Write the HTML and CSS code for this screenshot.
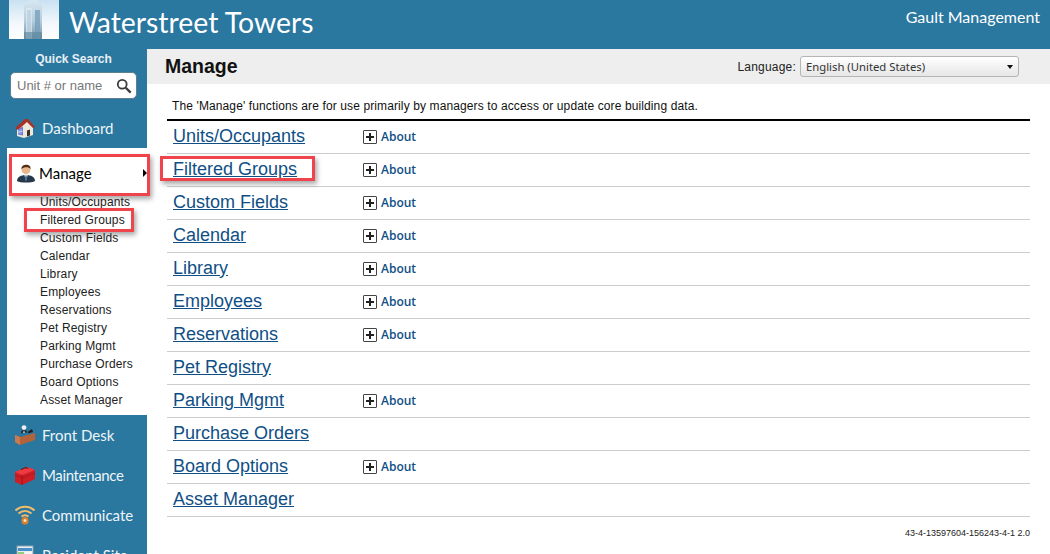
FILE: index.html
```html
<!DOCTYPE html>
<html lang="en">

<head>
    <meta charset="UTF-8">
    <meta name="viewport" content="width=device-width, initial-scale=1.0">
    <title>Waterstreet Towers - Manage</title>
    <link rel="stylesheet" href="styles.css">
</head>

<body>
    <header class="topbar">
        <svg class="logo" viewBox="0 0 50 39">
            <defs>
                <linearGradient id="sky" x1="0" y1="0" x2="0" y2="1">
                    <stop offset="0" stop-color="#c9e1f2" />
                    <stop offset=".6" stop-color="#f3f8fc" />
                    <stop offset="1" stop-color="#ffffff" />
                </linearGradient>
                <linearGradient id="tower" x1="0" y1="0" x2="0" y2="1">
                    <stop offset="0" stop-color="#d8e8f0" />
                    <stop offset=".55" stop-color="#b3cbdc" />
                    <stop offset="1" stop-color="#6d93a8" />
                </linearGradient>
            </defs>
            <rect width="50" height="39" fill="url(#sky)" />
            <path d="M15 39V6L18 1 27 0 33 4V39Z" fill="url(#tower)" />
            <path d="M17 8H23V39H17Z" fill="#dfeaf1" opacity=".75" />
            <path d="M26 10H31V39H26Z" fill="#6f97b4" opacity=".7" />
            <path d="M19 10V39M21 10V39M28 12V39M30 12V39" stroke="#8fb0c6" stroke-width=".6" />
            <path d="M15 32H33V39H15Z" fill="#5f8a9e" opacity=".65" />
        </svg>
        <div class="site-name">Waterstreet Towers</div>
        <div class="company">Gault Management</div>
    </header>

    <div class="layout">
        <aside class="sidebar">
            <h4 class="search-title">Quick Search</h4>
            <div class="search-box">
                <span>Unit # or name</span>
                <svg viewBox="0 0 18 18" class="search-icon">
                    <circle cx="7" cy="7" r="5" fill="none" stroke="#3a3a3a" stroke-width="2" />
                    <path d="M11 11l5.500 5.500" stroke="#3a3a3a" stroke-width="2.600" />
                </svg>
            </div>

            <a class="nav-item dashboard">
                <svg class="nav-icon" viewBox="0 0 20 20">
                    <path d="M2 9v9l7 2 9-3V8L11 3z" fill="#efe9dc" />
                    <path d="M0 10L10 1h3l7 8-2 1-6-6-9 8z" fill="#a83228" />
                    <path d="M3 11.500l5-3v9l-5-1z" fill="#6a78d8" />
                    <path d="M4 12v4M6 11v5M3 14l5-1" stroke="#e8e8f8" stroke-width=".6" />
                    <path d="M12 18.500v-6l3-1v6z" fill="#3b2f28" />
                </svg>
                Dashboard
            </a>

            <div class="nav-open">
                <a class="nav-item current marked">
                    <svg class="nav-icon" viewBox="0 0 20 20">
                        <path d="M1 18c0-4 4-6 9-6s9 2 9 6c-3 2-15 2-18 0z" fill="#26384a" />
                        <path d="M8 11h4l-2 7z" fill="#f2f4f6" />
                        <path d="M9.400 12.500h1.200l.4 3-1 2-1-2z" fill="#2d6fa8" />
                        <circle cx="10" cy="6.500" r="4.500" fill="#e8b68c" />
                        <path d="M5.400 6C5 1 15 0 14.600 6 13 3.500 8 3.500 5.400 6Z" fill="#4f2f14" />
                    </svg>
                    Manage
                    <span class="arrow"></span>
                </a>
                <ul class="subnav">
                    <li>Units/Occupants</li>
                    <li class="marked">Filtered Groups</li>
                    <li>Custom Fields</li>
                    <li>Calendar</li>
                    <li>Library</li>
                    <li>Employees</li>
                    <li>Reservations</li>
                    <li>Pet Registry</li>
                    <li>Parking Mgmt</li>
                    <li>Purchase Orders</li>
                    <li>Board Options</li>
                    <li>Asset Manager</li>
                </ul>
            </div>

            <a class="nav-item">
                <svg class="nav-icon" viewBox="0 0 20 20">
                    <path d="M0 10l5 2 15-4v7L5 20l-5-3z" fill="#b4623a" />
                    <path d="M0 10l5 2v8l-5-3z" fill="#c97b4f" />
                    <path d="M6 8.500c0-3 1.500-4 3-4s3 1 3 3z" fill="#20303c" />
                    <circle cx="9" cy="2.600" r="2.400" fill="#eef0f2" />
                    <path d="M9 5l.8 3H8.200z" fill="#f4f4f4" />
                    <path d="M12.500 7l4.500-3 1 3-4.500 1.200z" fill="#1e1e1e" />
                </svg>
                Front Desk
            </a>
            <a class="nav-item">
                <svg class="nav-icon" viewBox="0 0 20 20">
                    <path d="M0 7l12-5 8 3v9L7 20l-7-3z" fill="#cf1d26" />
                    <path d="M0 7l7 3 13-5-8-3z" fill="#ee3b42" />
                    <path d="M7 10v10" stroke="#8c1118" stroke-width=".8" />
                    <path d="M0 10l7 3 13-5" fill="none" stroke="#a5141c" stroke-width=".7" />
                    <path d="M6 4.500l5-2 2 1" fill="none" stroke="#5c1a1e" stroke-width="1.100" />
                </svg>
                <span class="tight">Maintenance</span>
            </a>
            <a class="nav-item">
                <svg class="nav-icon" viewBox="0 0 20 20">
                    <path d="M.5 5.500c5-5 14-5 19 0M3.500 8.500c4-3.500 9-3.500 13 0M6.500 11.500c2-1.500 5-1.500 7 0" fill="none" stroke="#f3bd6b" stroke-width="2" />
                    <rect x="6.500" y="12" width="7" height="7.500" rx="3" fill="#d8802c" />
                    <circle cx="10" cy="15.500" r="1.500" fill="#f6e3c4" />
                </svg>
                Communicate
            </a>
            <a class="nav-item">
                <svg class="nav-icon" viewBox="0 0 20 20">
                    <rect x="2" y="1" width="16" height="18" fill="#e8eef2" stroke="#8aa0ae" />
                    <rect x="3" y="3" width="14" height="3" fill="#4a90c8" />
                    <rect x="3" y="7" width="6" height="4" fill="#8fce7a" />
                    <rect x="10" y="7" width="7" height="4" fill="#f4f4f4" />
                </svg>
                Resident Site
            </a>
        </aside>

        <main class="content">
            <div class="title-bar">
                <h1>Manage</h1>
                <label class="language">
                    Language:
                    <span class="select">
                        English (United States)
                        <span class="select-arrow"></span>
                    </span>
                </label>
            </div>

            <div class="panel">
                <p class="intro">The 'Manage' functions are for use primarily by managers to access or update core building data.</p>
                <ul class="functions">
                    <li><a href="#">Units/Occupants</a><span class="about">About</span></li>
                    <li><span class="link-wrap marked"><a href="#">Filtered Groups</a></span><span class="about">About</span></li>
                    <li><a href="#">Custom Fields</a><span class="about">About</span></li>
                    <li><a href="#">Calendar</a><span class="about">About</span></li>
                    <li><a href="#">Library</a><span class="about">About</span></li>
                    <li><a href="#">Employees</a><span class="about">About</span></li>
                    <li><a href="#">Reservations</a><span class="about">About</span></li>
                    <li><a href="#">Pet Registry</a></li>
                    <li><a href="#">Parking Mgmt</a><span class="about">About</span></li>
                    <li><a href="#">Purchase Orders</a></li>
                    <li><a href="#">Board Options</a><span class="about">About</span></li>
                    <li><a href="#">Asset Manager</a></li>
                </ul>
                <div class="build">43-4-13597604-156243-4-1 2.0</div>
            </div>
        </main>
    </div>
</body>

</html>
```

FILE: styles.css
```css
*,
*::before,
*::after {
    margin: 0;
    padding: 0;
    box-sizing: border-box;
}

html,
body {
    height: 554px;
    overflow: hidden;
}

body {
    background-color: #2a77a0;
    font-family: "Liberation Sans", Arial, sans-serif;
}

ul {
    list-style: none;
}

.topbar {
    display: flex;
    align-items: flex-start;
    height: 49px;
    padding-left: 9px;
    background-color: #2a77a0;
    color: white;
    font-family: Lato, sans-serif;
}

.logo {
    width: 50px;
    height: 39px;
}

.site-name {
    margin-left: 10px;
    font-size: 28.4px;
    line-height: 45px;
}

.company {
    margin-left: auto;
    padding-right: 10px;
    font-size: 16px;
    line-height: 34px;
}

.layout {
    display: flex;
    height: 505px;
}

.sidebar {
    width: 147px;
    flex-shrink: 0;
    padding-top: 2px;
}

.search-title {
    font-size: 12px;
    line-height: 16px;
    text-align: center;
    color: #e8f0f5;
}

.search-box {
    display: flex;
    justify-content: space-between;
    align-items: center;
    width: 127px;
    height: 27px;
    margin: 5px 0 0 10px;
    padding: 0 4px 0 6px;
    background-color: white;
    border: 1px solid #5d7f92;
    border-radius: 5px;
    font-size: 13px;
    color: #777;
}

.search-icon {
    width: 16px;
    height: 16px;
}

.nav-item {
    position: relative;
    display: flex;
    align-items: center;
    gap: 7px;
    height: 40px;
    padding-left: 15px;
    font-family: Lato, sans-serif;
    font-size: 15px;
    color: #eef5f8;
}

.nav-icon {
    width: 20px;
    height: 20px;
    flex-shrink: 0;
}

.tight {
    letter-spacing: -0.35px;
}

.dashboard {
    margin-top: 9px;
}

.nav-open {
    margin-left: 7px;
    padding-bottom: 6px;
    background-color: white;
}

.current {
    height: 50px;
    gap: 3px;
    padding-left: 9px;
    color: black;
}

.arrow {
    position: absolute;
    right: 0;
    top: 21px;
    border-left: 4px solid black;
    border-top: 4px solid transparent;
    border-bottom: 4px solid transparent;
}

.subnav {
    margin-top: -5px;
}

.subnav li {
    position: relative;
    height: 18px;
    padding-left: 33px;
    font-size: 12px;
    letter-spacing: 0.14px;
    line-height: 18px;
    color: #222;
}

.marked {
    position: relative;
}

.marked::after {
    content: "";
    position: absolute;
    border: 3px solid #f0444c;
    box-shadow: 2px 3px 5px rgba(0, 0, 0, 0.35);
}

.current.marked::after {
    left: 2px;
    right: -3px;
    top: 6px;
    bottom: 2px;
}

.subnav .marked::after {
    left: 17px;
    width: 110px;
    top: -3px;
    height: 24px;
}

.link-wrap.marked::after {
    left: -13px;
    width: 155px;
    top: -3px;
    height: 25px;
}

.content {
    flex: 1;
    background-color: white;
}

.title-bar {
    display: flex;
    justify-content: space-between;
    align-items: center;
    height: 35px;
    padding: 0 31px 0 18px;
    background-color: #eee;
}

h1 {
    font-size: 19.5px;
    color: #111;
}

.language {
    display: flex;
    align-items: center;
    gap: 4px;
    font-size: 12px;
    letter-spacing: 0.2px;
    color: #222;
}

.select {
    position: relative;
    display: block;
    width: 219px;
    height: 21px;
    padding-left: 5px;
    background: linear-gradient(#fff, #e6e6e6);
    border: 1px solid #b5b5b5;
    border-radius: 3px;
    font-family: "Noto Sans", sans-serif;
    font-size: 11.3px;
    letter-spacing: 0;
    line-height: 20px;
    color: #333;
}

.select-arrow {
    position: absolute;
    right: 5px;
    top: 8px;
    border-top: 4px solid #111;
    border-left: 3.5px solid transparent;
    border-right: 3.5px solid transparent;
}

.panel {
    padding: 15px 20px 0;
}

.intro {
    height: 20px;
    padding-left: 5px;
    font-size: 12px;
    letter-spacing: 0.115px;
    line-height: 14px;
    color: #111;
}

.functions {
    border-top: 2px solid black;
}

.functions li {
    display: flex;
    align-items: center;
    height: 33px;
    padding: 0 0 2px 6px;
    border-bottom: 1px solid #ccc;
}

.functions a {
    font-size: 18px;
    color: #0f4f86;
}

.functions li > a,
.link-wrap {
    width: 190px;
    flex-shrink: 0;
}

.link-wrap {
    display: block;
}

.about {
    position: relative;
    margin-top: 2px;
    padding-left: 18px;
    font-family: "Open Sans", sans-serif;
    font-size: 12px;
    font-weight: 600;
    line-height: 16px;
    color: #0f4f86;
}

.about::before {
    content: "";
    position: absolute;
    left: 0;
    top: 1px;
    width: 14px;
    height: 14px;
    border: 1px solid #444;
    border-radius: 1px;
    background:
        linear-gradient(#222, #222) center / 8px 2px no-repeat,
        linear-gradient(#222, #222) center / 2px 8px no-repeat;
}

.build {
    margin-top: 11px;
    font-size: 9px;
    text-align: right;
    color: #222;
}
```
